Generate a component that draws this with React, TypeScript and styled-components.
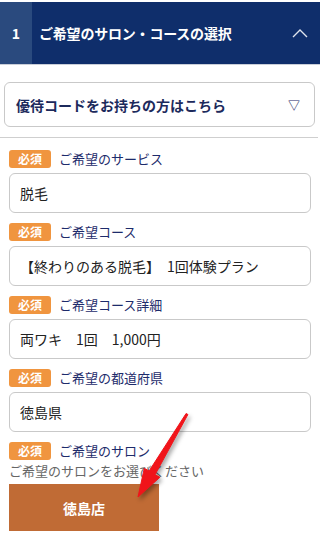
import React from "react";
import styled, { createGlobalStyle } from "styled-components";

const GlobalStyle = createGlobalStyle`
  body {
    margin: 0;
    background: #fff;
    font-family: "Noto Sans CJK JP", "Noto Sans", sans-serif;
  }
`;

const Page = styled.div`
  position: relative;
  width: 320px;
  padding-top: 2px;
`;

const Header = styled.div`
  display: flex;
  align-items: center;
  height: 62px;
  background: #0f2e6b;
  border-bottom: 1px solid #c9ced8;
  color: #fff;
`;

const StepNo = styled.div`
  width: 32px;
  height: 100%;
  display: flex;
  align-items: center;
  justify-content: center;
  background: #2a4a7e;
  font-size: 14px;
  font-weight: 700;
`;

const HeaderTitle = styled.div`
  flex: 1;
  padding-left: 7px;
  font-size: 14px;
  font-weight: 700;
  letter-spacing: -0.2px;
`;

const Chevron = styled.svg`
  margin-right: 12px;
`;

const CouponBox = styled.div`
  display: flex;
  align-items: center;
  justify-content: space-between;
  margin: 17px 5px 0 4px;
  height: 45px;
  box-sizing: border-box;
  padding: 0 14px 0 11px;
  border: 1px solid #c9c9c9;
  border-radius: 6px;
  color: #1c2a5c;
`;

const CouponText = styled.span`
  font-size: 14px;
  font-weight: 700;
`;

const Triangle = styled.span`
  font-size: 12px;
  color: #1c2a6c;
  font-weight: 700;
`;

const Divider = styled.hr`
  margin: 10px 2px 0 0;
  border: none;
  border-top: 1px solid #cfcfcf;
`;

const Form = styled.div`
  display: flex;
  flex-direction: column;
  padding: 12px 9px 0 9px;
`;

const Field = styled.div<{ $last?: boolean }>`
  display: flex;
  flex-direction: column;
  margin-bottom: ${(p) => (p.$last ? "0" : "10px")};
`;

const LabelRow = styled.div`
  display: flex;
  align-items: center;
  height: 18px;
  gap: 8px;
`;

const Badge = styled.span`
  width: 42px;
  height: 18px;
  line-height: 18px;
  border-radius: 3px;
  background: #f0953f;
  color: #fff;
  font-size: 12px;
  font-weight: 700;
  text-align: center;
`;

const Label = styled.span`
  font-size: 13px;
  line-height: 18px;
  color: #1d2b6b;
`;

const Input = styled.div`
  display: flex;
  align-items: center;
  margin-top: 5px;
  height: 40px;
  box-sizing: border-box;
  padding: 0 10px;
  border: 1px solid #c9c9c9;
  border-radius: 6px;
  font-size: 14px;
  color: #222;
  white-space: pre;
`;

const Note = styled.div`
  margin-top: 2px;
  font-size: 13px;
  line-height: 17px;
  color: #666;
`;

const SalonButton = styled.button`
  margin-top: 5px;
  width: 150px;
  height: 47px;
  border: none;
  background: #c06b35;
  color: #fff;
  font-family: inherit;
  font-size: 14px;
  font-weight: 700;
`;

const ArrowSvg = styled.svg`
  position: absolute;
  left: 120px;
  top: 400px;
  filter: drop-shadow(2px 3px 2px rgba(0, 0, 0, 0.35));
  pointer-events: none;
`;

const fields = [
  { label: "ご希望のサービス", value: "脱毛" },
  { label: "ご希望コース", value: "【終わりのある脱毛】　1回体験プラン" },
  { label: "ご希望コース詳細", value: "両ワキ　1回　1,000円" },
  { label: "ご希望の都道府県", value: "徳島県" },
];

const App: React.FC = () => {
  return (
    <Page>
      <GlobalStyle />
      <Header>
        <StepNo>1</StepNo>
        <HeaderTitle>ご希望のサロン・コースの選択</HeaderTitle>
        <Chevron width="16" height="10" viewBox="0 0 16 10">
          <polyline
            points="1,9 8,2 15,9"
            fill="none"
            stroke="#dfe4ee"
            strokeWidth="1.4"
          />
        </Chevron>
      </Header>

      <CouponBox>
        <CouponText>優待コードをお持ちの方はこちら</CouponText>
        <Triangle>▽</Triangle>
      </CouponBox>
      <Divider />

      <Form>
        {fields.map((f) => (
          <Field key={f.label}>
            <LabelRow>
              <Badge>必須</Badge>
              <Label>{f.label}</Label>
            </LabelRow>
            <Input>{f.value}</Input>
          </Field>
        ))}
        <Field $last>
          <LabelRow>
            <Badge>必須</Badge>
            <Label>ご希望のサロン</Label>
          </LabelRow>
          <Note>ご希望のサロンをお選びください</Note>
          <SalonButton>徳島店</SalonButton>
        </Field>
      </Form>

      {/* red annotation arrow */}
      <ArrowSvg width="80" height="110" viewBox="0 0 80 110">
        <polygon
          points="67.9,14.5 35.1,74.6 39.9,77.3 18,97 24.3,68.3 29.1,71 66.1,13.5"
          fill="#f0141a"
          stroke="#f0141a"
          strokeWidth="1"
          strokeLinejoin="round"
        />
      </ArrowSvg>
    </Page>
  );
};

export default App;
